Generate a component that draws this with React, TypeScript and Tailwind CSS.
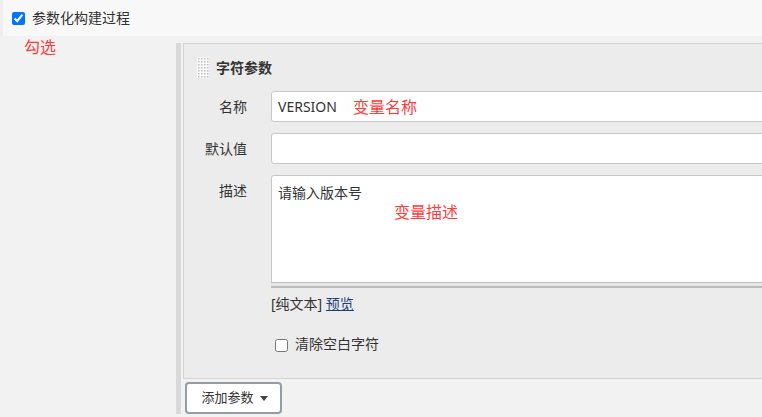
import React from 'react';

const Grip = () => (
  <svg width="12" height="21" viewBox="0 0 12 21" className="shrink-0">
    <rect width="12" height="21" fill="#fafafa" />
    {Array.from({ length: 7 }).map((_, r) =>
      Array.from({ length: 4 }).map((_, c) => (
        <rect key={`${r}-${c}`} x={1 + c * 3} y={1 + r * 3} width="1.5" height="1.5" fill="#bdbdbd" />
      ))
    )}
  </svg>
);

function FieldRow({ label, children }: { label: string; children: React.ReactNode }) {
  return (
    <div className="flex items-start">
      <div className="w-[63px] shrink-0 text-right text-[14px] text-[#333] leading-[31px]">{label}</div>
      <div className="ml-[24px] flex-1">{children}</div>
    </div>
  );
}

export default function App() {
  return (
    <div
      className="w-[762px] h-[417px] overflow-hidden bg-[#f2f2f2] text-[#333]"
      style={{ fontFamily: '"Noto Sans", "Noto Sans CJK SC", sans-serif' }}
    >
      {/* top bar */}
      <div className="h-[36px] bg-[#f8f8f8] flex items-center pl-[12px] gap-[7px] border-l-[3px] border-[#eeeeee]">
        <input type="checkbox" defaultChecked className="w-[13px] h-[13px] m-0 -ml-[3px]" />
        <span className="text-[14px] leading-none">参数化构建过程</span>
      </div>

      <div className="flex">
        {/* left column */}
        <div className="w-[176px] shrink-0">
          <div className="pl-[24px] pt-[1px] text-[16px] leading-[20px] text-[#ff3b3b]">勾选</div>
        </div>

        {/* vertical bar */}
        <div className="w-[5px] shrink-0 mt-[7px] h-[371px] bg-[#d9d9d9]" />

        {/* content */}
        <div className="ml-[2px] w-[640px] shrink-0 pt-[7px]">
          <div className="border border-[#d3d3d3] bg-[#ececec] pt-[13px] pb-[26px]">
            <div className="flex items-center gap-[7px] h-[21px] pl-[13px]">
              <Grip />
              <span className="text-[14px] font-bold">字符参数</span>
            </div>

            <div className="mt-[13px] flex flex-col gap-[11px]">
              <FieldRow label="名称">
                <div className="h-[31px] bg-white border border-[#c8c8c8] rounded-[3px] flex items-center pl-[6px]">
                  <span className="text-[14px]">VERSION</span>
                  <span className="ml-[16px] text-[16px] text-[#ff3b3b]">变量名称</span>
                </div>
              </FieldRow>

              <FieldRow label="默认值">
                <div className="h-[31px] bg-white border border-[#c8c8c8] rounded-[3px]" />
              </FieldRow>

              <FieldRow label="描述">
                <div>
                  <div className="h-[108px] bg-white border border-[#c8c8c8] border-b-[#bdbdbd] rounded-t-[3px] relative">
                    <span className="absolute left-[6px] top-[7px] text-[14px] leading-[20px]">请输入版本号</span>
                    <span className="absolute left-[122px] top-[25px] text-[16px] leading-[22px] text-[#ff3b3b]">变量描述</span>
                  </div>
                  <div className="h-[5px] bg-[#e6e6e6] border-b-[2px] border-[#bcbcbc]" />
                  <div className="mt-[7px] text-[14px] leading-[18px]">
                    [纯文本] <a className="text-[#1a3f7a] underline">预览</a>
                  </div>
                  <div className="mt-[26px] flex items-center gap-[7px] pl-[4px]">
                    <input type="checkbox" className="w-[13px] h-[13px] m-0" />
                    <span className="text-[14px] leading-none -mt-[4px]">清除空白字符</span>
                  </div>
                </div>
              </FieldRow>
            </div>
          </div>

          <div className="mt-[3px] pl-[2px]">
            <button className="w-[97px] h-[32px] bg-white border-2 border-[#949ca6] rounded-[4px] flex items-center justify-center gap-[6px] pl-[2px] text-[13px] text-[#333]">
              添加参数
              <svg width="8" height="5" viewBox="0 0 8 5">
                <path d="M0 0 L8 0 L4 5 Z" fill="#444" />
              </svg>
            </button>
          </div>
        </div>
      </div>
    </div>
  );
}
